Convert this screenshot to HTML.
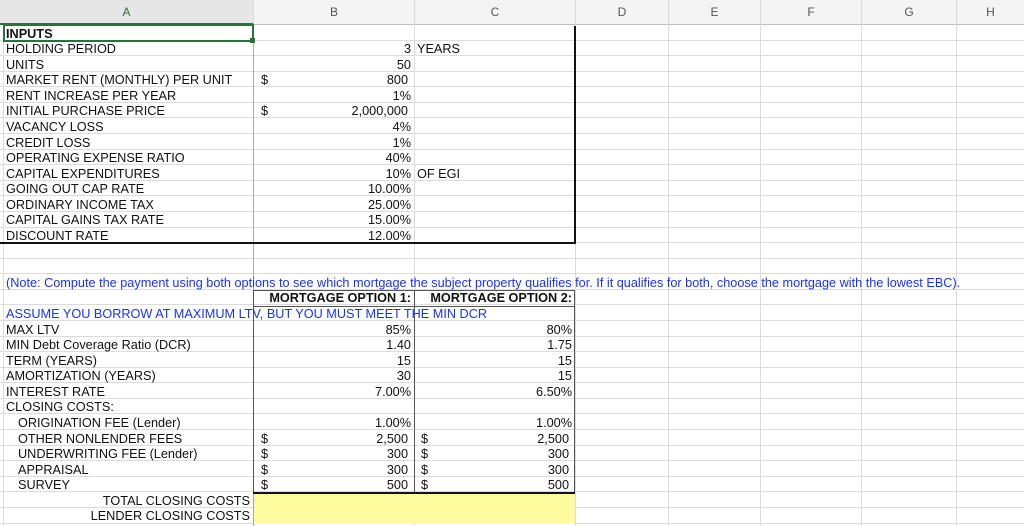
<!DOCTYPE html>
<html><head><meta charset="utf-8"><style>
*{margin:0;padding:0;box-sizing:border-box}
body{width:1024px;height:526px;overflow:hidden;background:#fff;font-family:"Liberation Sans",Arial,sans-serif;font-size:12.7px;color:#111;position:relative}
.hdr{position:absolute;top:0;left:0;width:1024px;height:25px;background:#f4f4f4;border-bottom:1px solid #bdbdbd}
.hl{position:absolute;top:0;height:25px;line-height:25px;text-align:center;color:#555;font-size:12px}
.hv{position:absolute;top:0;height:25px;width:1px;background:#d8d8d8}
.row{position:absolute;left:0;width:1024px;height:15.58px;border-bottom:1px solid #dcdcdc}
.vl{position:absolute;top:25px;bottom:0;width:1px;background:#dcdcdc}
.t{position:absolute;top:1.5px;line-height:15px;height:15px;white-space:nowrap}
.a{left:6px}
.ai{left:18px}
.b{left:254px;width:157px;text-align:right}
.bd{left:261px}
.c{left:414px;width:158px;text-align:right}
.cd{left:421px}
.cl{left:417px}
.blue{color:#1a33f0}
.bold{font-weight:bold}
</style></head><body>
<div class="hdr"></div>
<div class="hl" style="left:0;width:253px;color:#2f6e3f;border-bottom:2px solid #2f6e3f;height:25px;background:#e6e6e6">A</div>
<div class="hl" style="left:254px;width:160px">B</div>
<div class="hl" style="left:415px;width:160px">C</div>
<div class="hl" style="left:576px;width:92px">D</div>
<div class="hl" style="left:669px;width:91px">E</div>
<div class="hl" style="left:761px;width:100px">F</div>
<div class="hl" style="left:862px;width:94px">G</div>
<div class="hl" style="left:957px;width:67px">H</div>
<div class="hv" style="left:253px"></div><div class="hv" style="left:414px"></div><div class="hv" style="left:575px"></div><div class="hv" style="left:668px"></div><div class="hv" style="left:760px"></div><div class="hv" style="left:861px"></div><div class="hv" style="left:956px"></div>

<div class="row" style="top:25px"></div><div class="row" style="top:40.58px"></div><div class="row" style="top:56.16px"></div><div class="row" style="top:71.74px"></div><div class="row" style="top:87.32px"></div><div class="row" style="top:102.9px"></div><div class="row" style="top:118.48px"></div><div class="row" style="top:134.06px"></div><div class="row" style="top:149.64px"></div><div class="row" style="top:165.22px"></div><div class="row" style="top:180.8px"></div><div class="row" style="top:196.38px"></div><div class="row" style="top:211.96px"></div><div class="row" style="top:227.54px"></div><div class="row" style="top:243.12px"></div><div class="row" style="top:258.7px"></div><div class="row" style="top:274.28px"></div><div class="row" style="top:289.86px"></div><div class="row" style="top:305.44px"></div><div class="row" style="top:321.02px"></div><div class="row" style="top:336.6px"></div><div class="row" style="top:352.18px"></div><div class="row" style="top:367.76px"></div><div class="row" style="top:383.34px"></div><div class="row" style="top:398.92px"></div><div class="row" style="top:414.5px"></div><div class="row" style="top:430.08px"></div><div class="row" style="top:445.66px"></div><div class="row" style="top:461.24px"></div><div class="row" style="top:476.82px"></div><div class="row" style="top:492.4px"></div><div class="row" style="top:507.98px"></div>

<div class="vl" style="left:3px"></div><div class="vl" style="left:253px;background:#aaa"></div><div class="vl" style="left:414px"></div><div class="vl" style="left:575px"></div><div class="vl" style="left:668px"></div><div class="vl" style="left:760px"></div><div class="vl" style="left:861px"></div><div class="vl" style="left:956px"></div>

<div style="position:absolute;left:254px;top:492.4px;width:321px;height:31.2px;background:#fffb9e"></div>

<div style="position:absolute;left:3px;top:24px;width:251px;height:18px;border:2px solid #2f6e3f"></div>
<div style="position:absolute;left:250px;top:38px;width:5px;height:5px;background:#2f6e3f"></div>

<div style="position:absolute;left:574px;top:26px;width:2px;height:218px;background:#111"></div>
<div style="position:absolute;left:0;top:242px;width:576px;height:2px;background:#111"></div>

<div style="position:absolute;left:253px;top:290px;width:1px;height:202px;background:#555"></div>
<div style="position:absolute;left:414px;top:290px;width:1px;height:202px;background:#555"></div>
<div style="position:absolute;left:574px;top:290px;width:1px;height:202px;background:#555"></div>
<div style="position:absolute;left:253px;top:289.5px;width:322px;height:1px;background:#555"></div>
<div style="position:absolute;left:253px;top:305.5px;width:322px;height:1px;background:#555"></div>
<div style="position:absolute;left:253px;top:491.5px;width:322px;height:2px;background:#111"></div>

<div class="row" style="top:25px;border:none"><span class="t a bold">INPUTS</span></div>
<div class="row" style="top:40.58px;border:none"><span class="t a">HOLDING PERIOD</span><span class="t b">3</span><span class="t cl">YEARS</span></div>
<div class="row" style="top:56.16px;border:none"><span class="t a">UNITS</span><span class="t b">50</span></div>
<div class="row" style="top:71.74px;border:none"><span class="t a">MARKET RENT (MONTHLY) PER UNIT</span><span class="t bd">$</span><span class="t b" style="width:154px">800</span></div>
<div class="row" style="top:87.32px;border:none"><span class="t a">RENT INCREASE PER YEAR</span><span class="t b">1%</span></div>
<div class="row" style="top:102.9px;border:none"><span class="t a">INITIAL PURCHASE PRICE</span><span class="t bd">$</span><span class="t b" style="width:154px">2,000,000</span></div>
<div class="row" style="top:118.48px;border:none"><span class="t a">VACANCY LOSS</span><span class="t b">4%</span></div>
<div class="row" style="top:134.06px;border:none"><span class="t a">CREDIT LOSS</span><span class="t b">1%</span></div>
<div class="row" style="top:149.64px;border:none"><span class="t a">OPERATING EXPENSE RATIO</span><span class="t b">40%</span></div>
<div class="row" style="top:165.22px;border:none"><span class="t a">CAPITAL EXPENDITURES</span><span class="t b">10%</span><span class="t cl">OF EGI</span></div>
<div class="row" style="top:180.8px;border:none"><span class="t a">GOING OUT CAP RATE</span><span class="t b">10.00%</span></div>
<div class="row" style="top:196.38px;border:none"><span class="t a">ORDINARY INCOME TAX</span><span class="t b">25.00%</span></div>
<div class="row" style="top:211.96px;border:none"><span class="t a">CAPITAL GAINS TAX RATE</span><span class="t b">15.00%</span></div>
<div class="row" style="top:227.54px;border:none"><span class="t a">DISCOUNT RATE</span><span class="t b">12.00%</span></div>

<div class="row" style="top:274.28px;border:none"><span class="t a blue">(Note: Compute the payment using both options to see which mortgage the subject property qualifies for. If it qualifies for both, choose the mortgage with the lowest EBC).</span></div>
<div class="row" style="top:289.86px;border:none"><span class="t b bold">MORTGAGE OPTION 1:</span><span class="t c bold">MORTGAGE OPTION 2:</span></div>
<div class="row" style="top:305.44px;border:none"><span class="t a blue">ASSUME YOU BORROW AT MAXIMUM LTV, BUT YOU MUST MEET THE MIN DCR</span></div>
<div class="row" style="top:321.02px;border:none"><span class="t a">MAX LTV</span><span class="t b">85%</span><span class="t c">80%</span></div>
<div class="row" style="top:336.6px;border:none"><span class="t a">MIN Debt Coverage Ratio (DCR)</span><span class="t b">1.40</span><span class="t c">1.75</span></div>
<div class="row" style="top:352.18px;border:none"><span class="t a">TERM (YEARS)</span><span class="t b">15</span><span class="t c">15</span></div>
<div class="row" style="top:367.76px;border:none"><span class="t a">AMORTIZATION (YEARS)</span><span class="t b">30</span><span class="t c">15</span></div>
<div class="row" style="top:383.34px;border:none"><span class="t a">INTEREST RATE</span><span class="t b">7.00%</span><span class="t c">6.50%</span></div>
<div class="row" style="top:398.92px;border:none"><span class="t a">CLOSING COSTS:</span></div>
<div class="row" style="top:414.5px;border:none"><span class="t ai">ORIGINATION FEE (Lender)</span><span class="t b">1.00%</span><span class="t c">1.00%</span></div>
<div class="row" style="top:430.08px;border:none"><span class="t ai">OTHER NONLENDER FEES</span><span class="t bd">$</span><span class="t b" style="width:154px">2,500</span><span class="t cd">$</span><span class="t c" style="width:155px">2,500</span></div>
<div class="row" style="top:445.66px;border:none"><span class="t ai">UNDERWRITING FEE (Lender)</span><span class="t bd">$</span><span class="t b" style="width:154px">300</span><span class="t cd">$</span><span class="t c" style="width:155px">300</span></div>
<div class="row" style="top:461.24px;border:none"><span class="t ai">APPRAISAL</span><span class="t bd">$</span><span class="t b" style="width:154px">300</span><span class="t cd">$</span><span class="t c" style="width:155px">300</span></div>
<div class="row" style="top:476.82px;border:none"><span class="t ai">SURVEY</span><span class="t bd">$</span><span class="t b" style="width:154px">500</span><span class="t cd">$</span><span class="t c" style="width:155px">500</span></div>
<div class="row" style="top:492.4px;border:none"><span class="t" style="left:4px;width:246px;text-align:right">TOTAL CLOSING COSTS</span></div>
<div class="row" style="top:507.98px;border:none"><span class="t" style="left:4px;width:246px;text-align:right">LENDER CLOSING COSTS</span></div>
</body></html>
